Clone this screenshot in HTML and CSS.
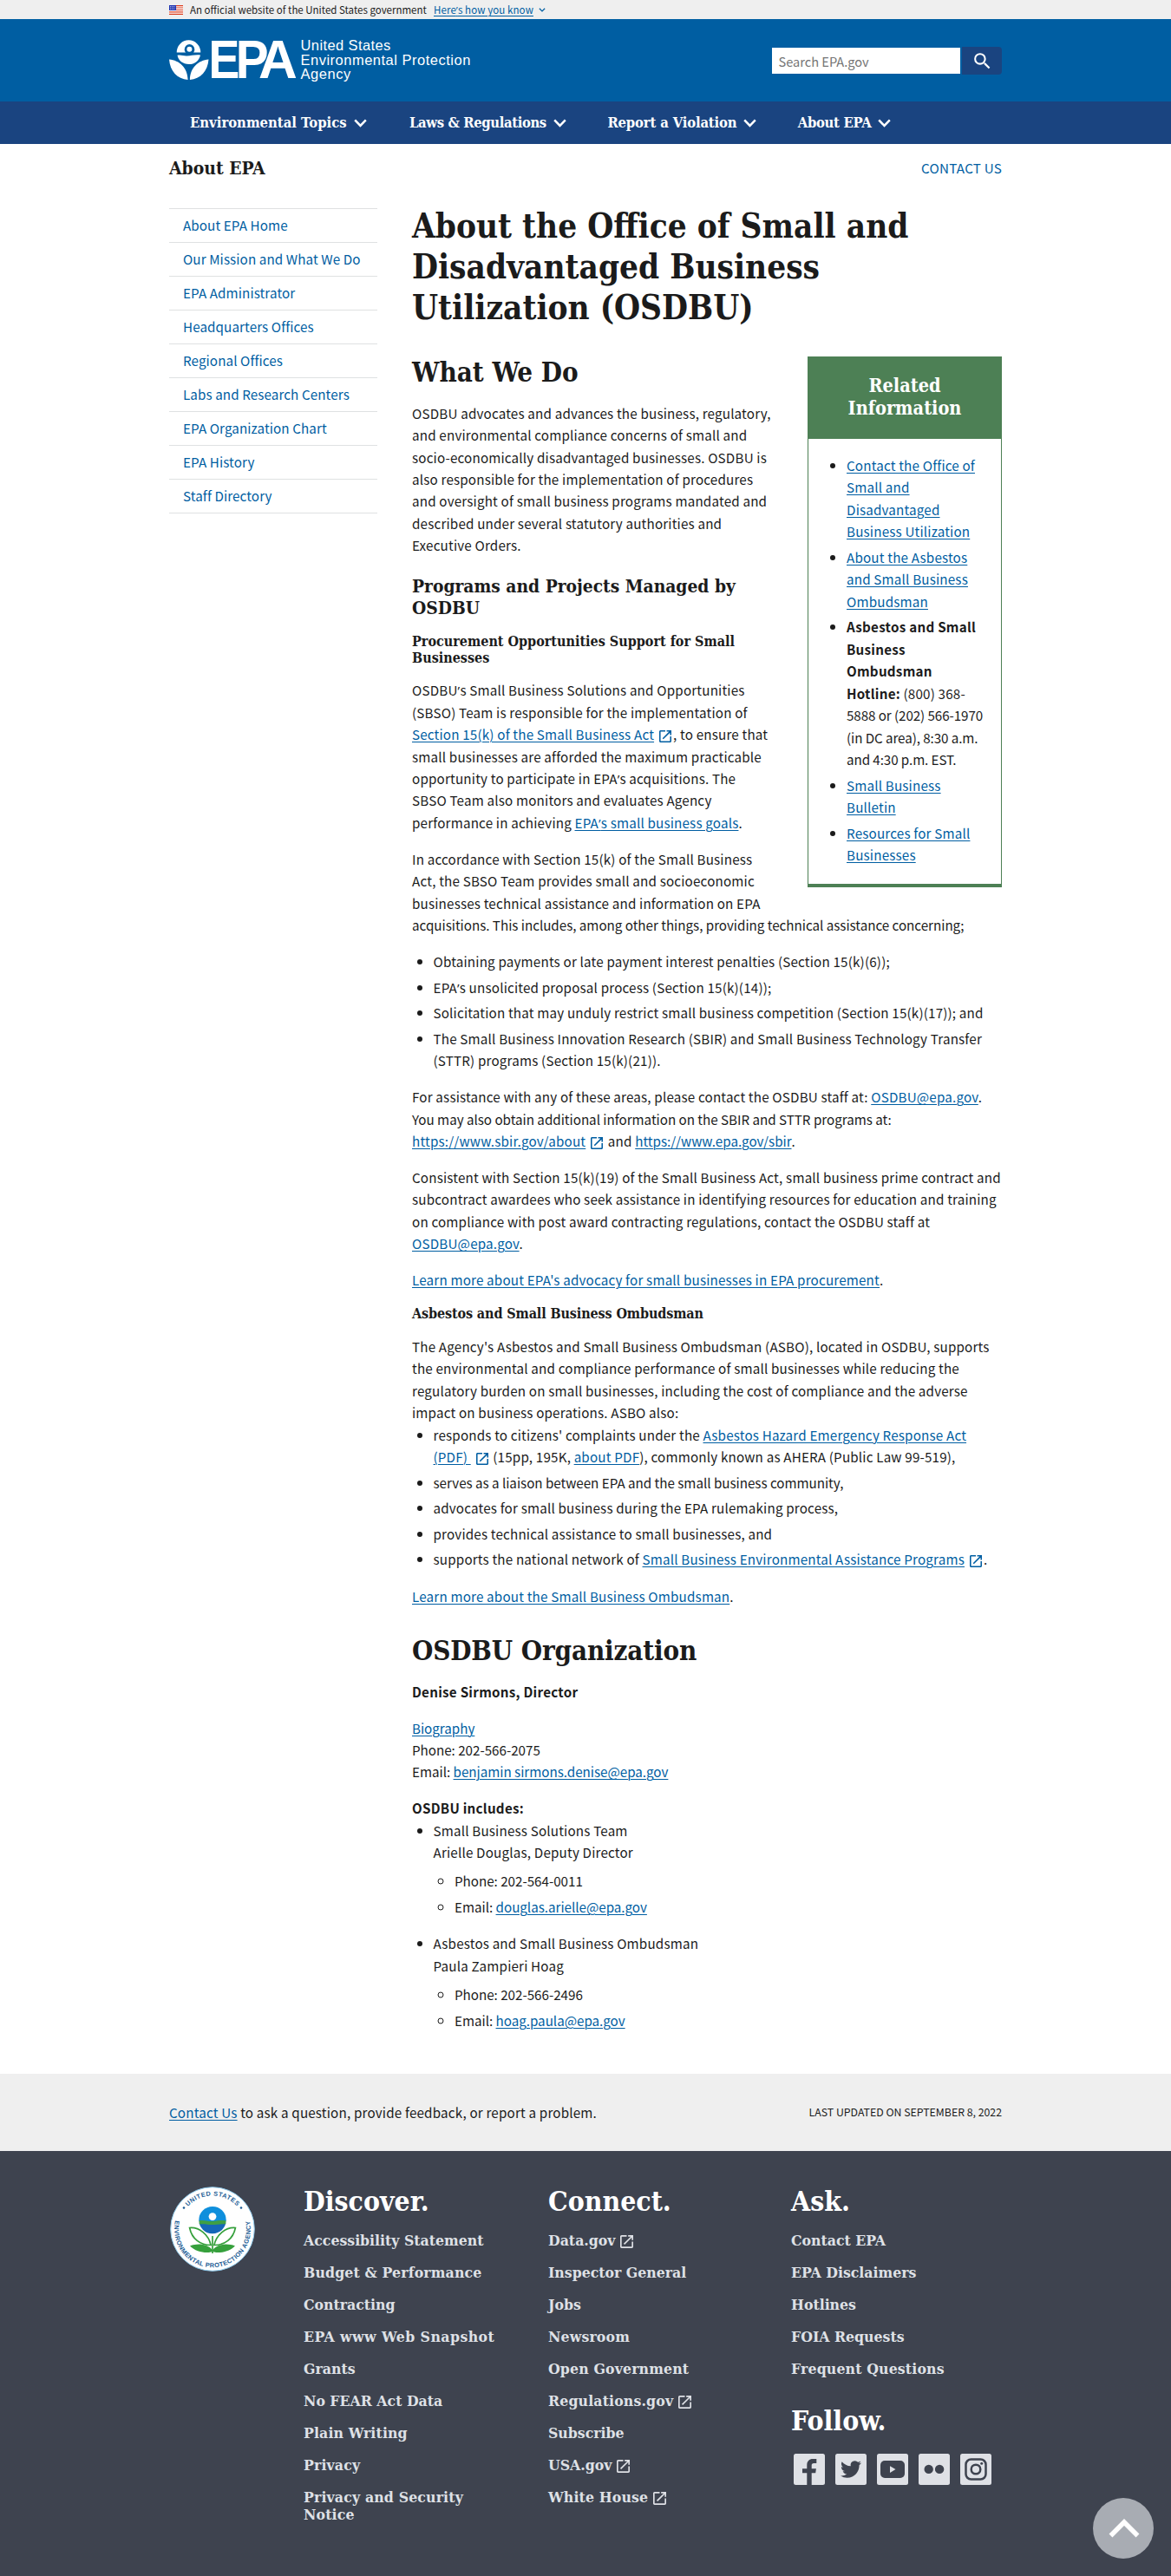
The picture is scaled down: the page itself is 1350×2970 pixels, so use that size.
FILE: index.html
```html
<!DOCTYPE html>
<html lang="en">
<head>
<meta charset="utf-8">
<title>About the Office of Small and Disadvantaged Business Utilization (OSDBU) | US EPA</title>
<link rel="stylesheet" href="styles.css">
</head>
<body>
<svg class="sprite" aria-hidden="true">
  <symbol id="ext" viewBox="3 3 18 18"><path d="M19 19H5V5h7V3H5c-1.100 0-2 .9-2 2v14c0 1.100.9 2 2 2h14c1.100 0 2-.9 2-2v-7h-2v7zM14 3v2h3.590l-9.830 9.830 1.410 1.410L19 6.410V10h2V3h-7z"/></symbol>
  <symbol id="chev" viewBox="0 0 15 10"><path d="M1.200 1.400 7.500 7.900l6.300-6.500" fill="none" stroke="currentColor" stroke-width="2.500"/></symbol>
</svg>

<div class="banner"><div class="wrap">
  <svg class="flag" viewBox="0 0 16 11"><path fill="#fff" d="M0 0h16v11H0z"/><path fill="#db3e1f" d="M0 0h16v1.200H0zM0 2.400h16v1.200H0zM0 4.900h16v1.200H0zM0 7.300h16v1.200H0zM0 9.800h16V11H0z"/><path fill="#1e33b1" d="M0 0h8v6H0z"/><path d="M1 1.500h6M1 3h6M1 4.500h6" stroke="#fff" stroke-width=".7" stroke-dasharray=".8 .8"/></svg>
  <span class="official">An official website of the United States government</span>
  <a class="know" href="#">Here<span class="apos">’</span>s how you know</a>
  <svg class="mini"><use href="#chev"/></svg>
</div></div>

<header class="header"><div class="wrap">
  <svg class="logo" width="350" height="52" viewBox="195 44 350 52">
    <g fill="#fff">
      <path d="M203.700 60.500a13.800 14.300 0 0 1 27.600 0h-8.300c1-1.200 1.300-2.300 1.300-3.600a5.800 5.800 0 0 0-11.600 0c0 1.300.4 2.400 1.400 3.600z"/>
      <circle cx="218.400" cy="56.800" r="3"/>
      <path d="M204.500 63.800c4-1 7 .8 11 .6 5-.2 9-1.600 15.500-1-1.200 6.300-6.500 10.700-13.300 10.700s-12-4.300-13.200-10.300z"/>
      <path d="M195 68.500c12 1 21.300 9.500 21.600 23.500-12.300-1-20.600-10-21.600-23.500zM240.500 68.500c-12 1-21.300 9.500-21.600 23.500 12.300-1 20.600-10 21.600-23.500z"/>
    </g>
    <g fill="#fff" font-family="Liberation Sans, Arial, sans-serif">
      <g font-weight="700" font-size="63">
        <text x="240.500" y="90.300" textLength="36" lengthAdjust="spacingAndGlyphs">E</text>
        <text x="271.700" y="90.300" textLength="38" lengthAdjust="spacingAndGlyphs">P</text>
        <text x="298" y="90.300" textLength="45" lengthAdjust="spacingAndGlyphs">A</text>
      </g>
      <g font-size="16.500">
        <text x="346.500" y="58.200" textLength="104">United States</text>
        <text x="346.500" y="75" textLength="196">Environmental Protection</text>
        <text x="346.500" y="91.400" textLength="58">Agency</text>
      </g>
    </g>
  </svg>
  <form class="search">
    <span class="field">Search EPA.gov</span>
    <span class="go"><svg viewBox="0 0 24 24"><path fill="#fff" d="M15.500 14h-.79l-.28-.27A6.471 6.471 0 0 0 16 9.500 6.500 6.500 0 1 0 9.500 16c1.610 0 3.090-.59 4.230-1.570l.27.28v.79l5 4.990L20.490 19l-4.990-5zm-6 0C7.010 14 5 11.990 5 9.500S7.010 5 9.500 5 14 7.010 14 9.500 11.990 14 9.500 14z"/></svg></span>
  </form>
</div></header>

<nav class="nav"><div class="wrap">
  <a href="#">Environmental Topics<svg><use href="#chev"/></svg></a>
  <a href="#" class="laws">Laws &amp; Regulations<svg><use href="#chev"/></svg></a>
  <a href="#" class="report">Report a Violation<svg><use href="#chev"/></svg></a>
  <a href="#" class="about">About EPA<svg><use href="#chev"/></svg></a>
</div></nav>

<div class="wrap area">
  <div class="area-title">About EPA</div>
  <a class="area-contact" href="#">CONTACT US</a>
</div>

<div class="wrap page">
  <ul class="sidenav">
    <li><a href="#">About EPA Home</a></li>
    <li><a href="#">Our Mission and What We Do</a></li>
    <li><a href="#">EPA Administrator</a></li>
    <li><a href="#">Headquarters Offices</a></li>
    <li><a href="#">Regional Offices</a></li>
    <li><a href="#">Labs and Research Centers</a></li>
    <li><a href="#">EPA Organization Chart</a></li>
    <li><a href="#">EPA History</a></li>
    <li><a href="#">Staff Directory</a></li>
  </ul>

  <main class="main">
    <h1>About the Office of Small and<br>Disadvantaged Business<br>Utilization (OSDBU)</h1>

    <aside class="box">
      <div class="box-title">Related<br>Information</div>
      <ul>
        <li><a href="#">Contact the Office of<br>Small and<br>Disadvantaged<br>Business Utilization</a></li>
        <li><a href="#">About the Asbestos<br>and Small Business<br>Ombudsman</a></li>
        <li><b>Asbestos and Small<br>Business<br>Ombudsman<br>Hotline:</b> (800) 368-<br><span class="tight">5888 or (202) 566-1970<br>(in DC area), 8:30 a.m.<br>and 4:30 p.m. EST.</span></li>
        <li><a href="#">Small Business<br>Bulletin</a></li>
        <li><a href="#">Resources for Small<br>Businesses</a></li>
      </ul>
    </aside>

    <h2>What We Do</h2>
    <p>OSDBU advocates and advances the business, regulatory,<br>and environmental compliance concerns of small and<br>socio-economically disadvantaged businesses. OSDBU is<br>also responsible for the implementation of procedures<br>and oversight of small business programs mandated and<br>described under several statutory authorities and<br>Executive Orders.</p>

    <h3>Programs and Projects Managed by<br>OSDBU</h3>
    <h4>Procurement Opportunities Support for Small<br>Businesses</h4>
    <p class="after-h4">OSDBU<span class="apos">’</span>s Small Business Solutions and Opportunities<br>(SBSO) Team is responsible for the implementation of<br><a href="#">Section 15(k) of the Small Business Act</a><svg class="ext"><use href="#ext"/></svg>, to ensure that<br>small businesses are afforded the maximum practicable<br>opportunity to participate in EPA<span class="apos">’</span>s acquisitions. The<br>SBSO Team also monitors and evaluates Agency<br>performance in achieving <a href="#">EPA<span class="apos">’</span>s small business goals</a>.</p>
    <p>In accordance with Section 15(k) of the Small Business<br>Act, the SBSO Team provides small and socioeconomic<br>businesses technical assistance and information on EPA<br><span class="tight">acquisitions. This includes, among other things, providing technical assistance concerning;</span></p>
    <ul>
      <li>Obtaining payments or late payment interest penalties (Section 15(k)(6));</li>
      <li>EPA<span class="apos">’</span>s unsolicited proposal process (Section 15(k)(14));</li>
      <li>Solicitation that may unduly restrict small business competition (Section 15(k)(17)); and</li>
      <li>The Small Business Innovation Research (SBIR) and Small Business Technology Transfer<br>(STTR) programs (Section 15(k)(21)).</li>
    </ul>
    <p>For assistance with any of these areas, please contact the OSDBU staff at: <a href="#">OSDBU@epa.gov</a>.<br><span class="tight">You may also obtain additional information on the SBIR and STTR programs at:</span><br><a href="#">https://www.sbir.gov/about</a><svg class="ext"><use href="#ext"/></svg> and <a class="tight" href="#">https://www.epa.gov/sbir</a>.</p>
    <p>Consistent with Section 15(k)(19) of the Small Business Act, small business prime contract and<br>subcontract awardees who seek assistance in identifying resources for education and training<br>on compliance with post award contracting regulations, contact the OSDBU staff at<br><a href="#">OSDBU@epa.gov</a>.</p>
    <p><a href="#">Learn more about EPA's advocacy for small businesses in EPA procurement</a>.</p>

    <h4 class="narrow">Asbestos and Small Business Ombudsman</h4>
    <p class="lead">The Agency's Asbestos and Small Business Ombudsman (ASBO), located in OSDBU, supports<br>the environmental and compliance performance of small businesses while reducing the<br>regulatory burden on small businesses, including the cost of compliance and the adverse<br>impact on business operations. ASBO also:</p>
    <ul>
      <li>responds to citizens' complaints under the <a href="#">Asbestos Hazard Emergency Response Act<br>(PDF)&nbsp;</a><svg class="ext"><use href="#ext"/></svg> (15pp, 195K, <a href="#">about PDF</a>), commonly known as AHERA (Public Law 99-519),</li>
      <li class="tight">serves as a liaison between EPA and the small business community,</li>
      <li>advocates for small business during the EPA rulemaking process,</li>
      <li>provides technical assistance to small businesses, and</li>
      <li>supports the national network of <a href="#">Small Business Environmental Assistance Programs</a><svg class="ext"><use href="#ext"/></svg>.</li>
    </ul>
    <p><a href="#">Learn more about the Small Business Ombudsman</a>.</p>

    <h2 class="org narrow">OSDBU Organization</h2>
    <p><b>Denise Sirmons, Director</b></p>
    <p class="tight"><a href="#">Biography</a><br>Phone: 202-566-2075<br>Email: <a href="#">benjamin sirmons.denise@epa.gov</a></p>
    <p class="lead"><b>OSDBU includes:</b></p>
    <ul class="people">
      <li>Small Business Solutions Team<br>Arielle Douglas, Deputy Director
        <ul class="tight"><li>Phone: 202-564-0011</li><li>Email: <a href="#">douglas.arielle@epa.gov</a></li></ul></li>
      <li>Asbestos and Small Business Ombudsman<br>Paula Zampieri Hoag
        <ul class="tight"><li>Phone: 202-566-2496</li><li>Email: <a href="#">hoag.paula@epa.gov</a></li></ul></li>
    </ul>
  </main>
</div>

<div class="updated"><div class="wrap">
  <div><a href="#">Contact Us</a> to ask a question, provide feedback, or report a problem.</div>
  <div class="date">LAST UPDATED ON SEPTEMBER 8, 2022</div>
</div></div>

<footer class="footer"><div class="wrap">
  <svg class="seal" viewBox="0 0 98 98">
    <circle cx="49" cy="49" r="48.300" fill="#fff" stroke="#8cc8ea" stroke-width="1"/>
    <defs>
      <path id="arc-top" d="M10.500 49a38.500 38.500 0 0 1 77 0"/>
      <path id="arc-bottom" d="M14.800 21.500A44 44 0 1 0 83.200 21.500"/>
      <clipPath id="globe"><circle cx="49" cy="38.600" r="15.700"/></clipPath>
    </defs>
    <g fill="#1b5c94" font-family="Liberation Sans, Arial, sans-serif" font-size="7.300" font-weight="700" text-anchor="middle">
      <text letter-spacing=".55"><textPath href="#arc-top" startOffset="50%">UNITED STATES</textPath></text>
      <text letter-spacing=".4"><textPath href="#arc-bottom" startOffset="50%">ENVIRONMENTAL PROTECTION AGENCY</textPath></text>
      <circle cx="16" cy="24.500" r="1.300"/><circle cx="82" cy="24.500" r="1.300"/>
    </g>
    <g clip-path="url(#globe)">
      <path fill="#0f8fdc" d="M33 22h32v18H33z"/>
      <path fill="#1567b8" d="M33 42h32v14H33z"/>
      <path fill="#3f9f45" d="M33 39.500c7-1.500 10 1 16 .5s10-1.500 16-.5v4c-6-1-10 .4-16 .4s-10-1.400-16-.4z"/>
    </g>
    <circle cx="49" cy="34.600" r="4.400" fill="#fff"/>
    <g stroke="#36a03c" stroke-width="1.700" fill="none">
      <path d="M22.600 47.500c11-1 22 8 24.500 20-12 0-22-7-24.500-20zM75.400 47.500c-11-1-22 8-24.500 20 12 0 22-7 24.500-20z"/>
      <path d="M49 57v20"/>
    </g>
    <path fill="#36a03c" d="M23 68.500c9-3.500 21-2.500 26 5 5-7.500 17-8.500 26-5-7 7.500-21 9-26 6.200-5 2.800-19 1.300-26-6.200z"/>
  </svg>

  <div class="col">
    <h2>Discover.</h2>
    <a href="#">Accessibility Statement</a>
    <a href="#" class="wide">Budget &amp; Performance</a>
    <a href="#">Contracting</a>
    <a href="#" class="wider">EPA www Web Snapshot</a>
    <a href="#">Grants</a>
    <a href="#">No FEAR Act Data</a>
    <a href="#" class="wide">Plain Writing</a>
    <a href="#" class="wide">Privacy</a>
    <a href="#" class="wide">Privacy and Security<br>Notice</a>
  </div>
  <div class="col">
    <h2>Connect.</h2>
    <a href="#">Data.gov<svg class="ext"><use href="#ext"/></svg></a>
    <a href="#">Inspector General</a>
    <a href="#">Jobs</a>
    <a href="#" class="wide">Newsroom</a>
    <a href="#" class="wide">Open Government</a>
    <a href="#" class="wide">Regulations.gov<svg class="ext"><use href="#ext"/></svg></a>
    <a href="#">Subscribe</a>
    <a href="#">USA.gov<svg class="ext"><use href="#ext"/></svg></a>
    <a href="#" class="wide">White House<svg class="ext"><use href="#ext"/></svg></a>
  </div>
  <div class="col">
    <h2>Ask.</h2>
    <a href="#">Contact EPA</a>
    <a href="#">EPA Disclaimers</a>
    <a href="#">Hotlines</a>
    <a href="#">FOIA Requests</a>
    <a href="#" class="wide">Frequent Questions</a>
    <h2 class="follow">Follow.</h2>
    <div class="social">
      <svg viewBox="0 0 36 36"><rect width="36" height="36" rx="2.500"/><path class="ink" d="M15.300 36V22.300H10v-5h5.300V13c0-4.300 2.600-7 6.800-7h4.200v5h-3c-2 0-2.600 1-2.600 2.600v3.700h5.200l-.7 5h-4.500V36z"/></svg>
      <svg viewBox="0 0 36 36"><rect width="36" height="36" rx="2.500"/><path class="ink" transform="translate(6 6)" d="M23.953 4.570a10 10 0 0 1-2.825.775 4.958 4.958 0 0 0 2.163-2.723c-.951.555-2.005.959-3.127 1.184a4.920 4.920 0 0 0-8.384 4.482C7.690 8.095 4.067 6.130 1.640 3.162a4.822 4.822 0 0 0-.666 2.475c0 1.710.87 3.213 2.188 4.096a4.904 4.904 0 0 1-2.228-.616v.06a4.923 4.923 0 0 0 3.946 4.827 4.996 4.996 0 0 1-2.212.085 4.936 4.936 0 0 0 4.604 3.417 9.867 9.867 0 0 1-6.102 2.105c-.39 0-.779-.023-1.170-.067a13.995 13.995 0 0 0 7.557 2.209c9.053 0 13.998-7.496 13.998-13.985 0-.21 0-.42-.015-.63A9.935 9.935 0 0 0 24 4.590z"/></svg>
      <svg viewBox="0 0 36 36"><rect width="36" height="36" rx="2.500"/><rect class="ink" x="4" y="8" width="28" height="20" rx="5"/><path d="M15 14.300v7.600l6.500-3.800z"/></svg>
      <svg viewBox="0 0 36 36"><rect width="36" height="36" rx="2.500"/><circle class="ink" cx="11.700" cy="17.900" r="5.200"/><circle class="ink" cx="24.100" cy="17.900" r="5.200"/></svg>
      <svg viewBox="0 0 36 36"><rect width="36" height="36" rx="2.500"/><g class="line"><rect x="6.500" y="6.500" width="23" height="23" rx="6"/><circle cx="18" cy="18" r="5.300"/></g><circle class="ink" cx="24.700" cy="11.300" r="1.500"/></svg>
    </div>
  </div>
</div>
<a class="totop" href="#"><svg viewBox="0 0 70 70"><path d="M20.500 43.500 36 28l15.500 15.500" fill="none" stroke="#fff" stroke-width="5.500"/></svg></a>
</footer>
</body>
</html>
```
FILE: styles.css
```css
* { box-sizing: border-box; }
body {
  margin: 0;
  position: relative;
  background: #fff;
  color: #1b1b1b;
  font-family: "Noto Sans CJK SC", "Open Sans", sans-serif;
  font-size: 15.2px;
  line-height: 25.44px;
  letter-spacing: .18px;
}
a { color: #005ea2; text-decoration: underline; text-underline-offset: 1.5px; text-decoration-thickness: 1px; }
b { letter-spacing: .26px; }
ul { margin: 0; padding: 0; }
svg { display: block; }
.sprite { display: none; }
.wrap { width: 960px; margin: 0 auto; }
/* the CJK face sets the curly apostrophe full width */
.apos { font-family: "Open Sans", sans-serif; line-height: 1; }
.tight { letter-spacing: -.02px; }

h1, h2, h3, h4, .nav, .area-title, .box-title, .col {
  font-family: "DejaVu Serif Condensed", "DejaVu Serif", serif;
  font-weight: 700;
  letter-spacing: 0;
}
h1, h2, h3, h4 { margin: 0; white-space: nowrap; }

/* government banner */
.banner { height: 22px; background: #efefef; font-size: 11.5px; line-height: 22px; letter-spacing: 0; }
.banner .wrap { display: flex; align-items: center; }
.flag { width: 16px; height: 11px; }
.official { width: 281px; margin-left: 8px; white-space: nowrap; }
.know { white-space: nowrap; letter-spacing: .1px; }
.mini { width: 8px; height: 5px; margin-left: 6px; color: #005ea2; }

/* masthead */
.header { height: 95px; background: #005ea2; }
.header .wrap { display: flex; justify-content: space-between; padding-top: 22px; }
.search { display: flex; width: 265.5px; height: 32px; margin: 10px 0 0; }
.field { flex: 1; margin: .5px 2px 1px 0; padding-left: 8px; background: #fff; color: #757575; font-size: 14.6px; line-height: 31px; letter-spacing: 0; }
.go { display: flex; width: 46px; align-items: center; justify-content: center; background: #1a4480; border-radius: 0 4px 4px 0; }
.go svg { width: 25px; height: 25px; }

.nav { height: 49px; background: #1a4480; font-size: 16.5px; line-height: 49px; }
.nav .wrap { display: grid; grid-template-columns: 253px 228.4px 219.3px auto; padding-left: 24px; }
.nav a { display: flex; align-items: center; gap: 8px; color: #fff; text-decoration: none; white-space: nowrap; }
.nav svg { width: 15px; height: 10px; }
.nav .laws { letter-spacing: -.38px; }
.nav .report { letter-spacing: -.16px; }
.nav .about { letter-spacing: -.3px; }

.area { display: flex; justify-content: space-between; height: 72px; padding-top: 15px; }
.area-title { font-size: 20.9px; line-height: 25.7px; }
.area-contact { text-decoration: none; letter-spacing: .23px; }

/* page grid */
.page { display: grid; grid-template-columns: 240px 680px; gap: 40px; height: 2153px; }
.sidenav { margin-top: 2px; list-style: none; }
.sidenav li { height: 39px; padding: 4.7px 16px 0; border-top: 1px solid #dfe1e2; line-height: 27px; letter-spacing: .1px; white-space: nowrap; }
.sidenav li:last-child { height: 40px; border-bottom: 1px solid #dfe1e2; }
.sidenav a { text-decoration: none; }

h1 { margin-bottom: 32px; font-size: 38.4px; line-height: 46.85px; }
.main h2 { font-size: 31.05px; line-height: 37.5px; margin-bottom: 15.7px; }
.main .org { margin-top: 31.6px; }
.narrow { letter-spacing: -.12px; }
h3 { margin-top: 21px; font-size: 20.8px; line-height: 25.7px; }
h4 { margin: 16px 0 15.7px; font-size: 16px; line-height: 19.2px; }
p { margin: 0 0 16.4px; white-space: nowrap; }
.after-h4 { margin-top: -1px; }
.lead { margin-bottom: 0; }
.main ul { margin-bottom: 16.6px; padding-left: 24.5px; white-space: nowrap; }
.main li { margin-bottom: 4.2px; }
.main li:last-child { margin-bottom: 0; }
.people > li { margin-bottom: 17px; }
.main .people ul { margin: 7.7px 0 0; }
.main .people > li:first-child { margin-bottom: 17px; }

.ext { display: inline-block; width: 14px; height: 14px; margin: 0 2px 0 6px; vertical-align: -3px; fill: #005ea2; }

.box { float: right; width: 224px; margin-left: 40px; border: 1px solid #4d8055; border-bottom-width: 4px; }
.box-title { height: 94px; padding-top: 20px; background: #4d8055; color: #fff; font-size: 21.5px; line-height: 26px; text-align: center; }
.main .box ul { margin: 0; padding: 18.5px 0 20.5px 44px; }
.box .tight { letter-spacing: -.08px; }

/* footer */
.updated { height: 89px; background: #efefef; }
.updated .wrap { display: flex; justify-content: space-between; padding-top: 31.5px; }
.date { font-size: 12.3px; letter-spacing: 0; }
.footer { height: 490px; background: #3e434f; }
.footer .wrap { display: grid; grid-template-columns: 155px 282px 280px 243px; padding-top: 39px; }
.seal { width: 98px; height: 98px; margin: 1.5px 0 0 .5px; }
.col { display: flex; flex-direction: column; gap: 16.7px; font-size: 17.5px; line-height: 20.35px; color: #fff; white-space: nowrap; }
.col h2 { font-size: 31.7px; line-height: 37px; }
.col a { color: #dfe1e6; text-decoration: none; }
.col .wide { letter-spacing: .15px; }
.col .wider { letter-spacing: .45px; }
.col .ext { width: 15px; height: 15px; margin: 0 0 0 6px; fill: #dfe1e6; }
.col .follow { margin-top: 14.6px; }
.social { display: flex; gap: 12px; margin: 3px 0 0 3px; }
.social svg { width: 36px; height: 36px; fill: #dfe1e6; }
.social .ink { fill: #3e434f; }
.social .line { fill: none; stroke: #3e434f; stroke-width: 2.5; }
.totop { position: absolute; right: 20px; bottom: 20px; width: 70px; height: 70px; border-radius: 50%; background: #a8acb3; }
```
